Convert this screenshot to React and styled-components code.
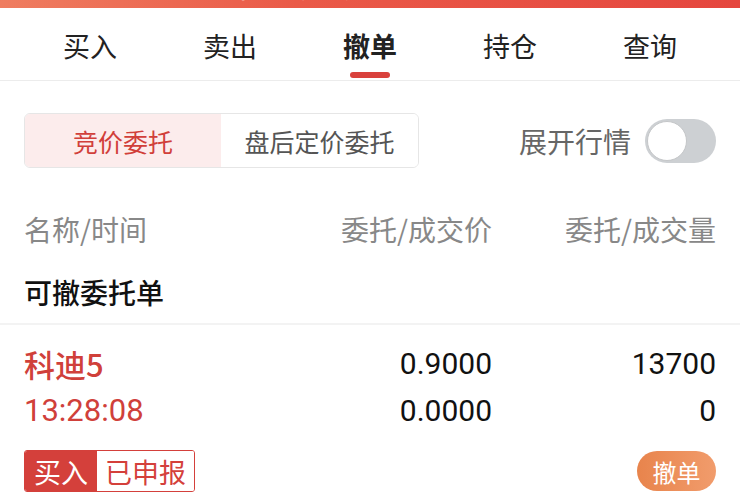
import React, { useState } from 'react';
import styled, { createGlobalStyle } from 'styled-components';

const GlobalStyle = createGlobalStyle`
  html, body { margin:0; padding:0; background:#fff; }
  body { font-family: Roboto, "Noto Sans CJK SC", sans-serif; }
`;

const Page = styled.div`
width:740px;
height:500px;
overflow:hidden;
background:#fff;
`;

const TopBar = styled.div`
height:8px;
overflow:hidden;
background:linear-gradient(90deg,#ef7d60 0%,#ea5a48 40%,#e5463e 100%);
display:flex;
align-items:flex-start;
justify-content:center;
padding-right:140px;
`;

const TopTitle = styled.span`
display:block;
color:#fff;
font-size:32px;
line-height:32px;
margin-top:-33px;
font-family:"Noto Sans CJK SC", sans-serif;
`;

const Tabs = styled.div`
display:grid;
grid-template-columns:repeat(5,1fr);
padding:0 20px;
height:72px;
border-bottom:1px solid #ececec;
`;

const Tab = styled.div`
display:flex;
flex-direction:column;
align-items:center;
justify-content:flex-end;
font-family:"Noto Sans CJK SC", sans-serif;
font-size:27px;
font-weight:${p => (p.active ? 700 : 400)};
color:#222;
cursor:pointer;
& span { line-height:36px; margin-bottom:8px; }
& i {
  display:block;
  width:40px;
  height:6px;
  border-radius:3px;
  background:${p => (p.active ? '#d9413c' : 'transparent')};
  margin-bottom:2px;
}
`;

const FilterRow = styled.div`
display:flex;
align-items:center;
justify-content:space-between;
padding:32px 24px 0;
`;

const Segment = styled.div`
display:flex;
height:53px;
border:1px solid #e6e6e6;
border-radius:6px;
overflow:hidden;
`;

const SegItem = styled.div`
width:${p => p.w}px;
display:flex;
align-items:center;
justify-content:center;
font-family:"Noto Sans CJK SC", sans-serif;
font-size:25px;
color:${p => (p.active ? '#d13f3a' : '#555')};
background:${p => (p.active ? '#fcecec' : '#fff')};
`;

const Expand = styled.div`
display:flex;
align-items:center;
gap:14px;
font-family:"Noto Sans CJK SC", sans-serif;
font-size:28px;
color:#666;
`;

const Toggle = styled.div`
width:71px;
height:44px;
border-radius:22px;
background:${p => (p.on ? '#e5463e' : '#cdd0d3')};
display:flex;
align-items:center;
justify-content:${p => (p.on ? 'flex-end' : 'flex-start')};
padding:0 2px;
box-sizing:border-box;
cursor:pointer;
& b {
  width:40px;
  height:40px;
  border-radius:50%;
  background:#fff;
  box-sizing:border-box;
  border:1px solid #c4c6c8;
}
`;

const ColHead = styled.div`
display:grid;
grid-template-columns:1fr 210px 224px;
padding:0 24px;
margin-top:36px;
height:50px;
align-items:center;
font-family:"Noto Sans CJK SC", sans-serif;
font-size:28px;
color:#888;
& span:not(:first-child) { text-align:right; }
`;

const Section = styled.div`
padding:20px 24px 13px;
line-height:36px;
font-family:"Noto Sans CJK SC", sans-serif;
font-size:28px;
font-weight:500;
color:#111;
border-bottom:2px solid #f3f3f3;
`;

const Order = styled.div`
padding:16px 24px 0;
`;

const Line = styled.div`
display:grid;
grid-template-columns:1fr 210px 224px;
align-items:center;
height:36px;
margin-bottom:15px;
font-family:Roboto, "Noto Sans CJK SC", sans-serif;
font-size:30px;
color:#111;
& span:not(:first-child) { text-align:right; }
`;

const Name = styled.span`
color:#d0403a;
font-size:31px;
font-weight:500;
font-family:"Noto Sans CJK SC", Roboto, sans-serif;
`;

const Time = styled.span`
color:#d0403a;
font-size:31px;
font-family:Roboto, sans-serif;
`;

const Actions = styled.div`
display:flex;
justify-content:space-between;
align-items:center;
margin-top:22px;
`;

const Tags = styled.div`
display:flex;
height:42px;
border:1.5px solid #d4403b;
border-radius:3px;
overflow:hidden;
box-sizing:border-box;
`;

const Tag = styled.span`
display:flex;
align-items:center;
padding:0 ${p => (p.filled ? 9 : 8)}px;
font-family:"Noto Sans CJK SC", sans-serif;
font-size:27px;
color:${p => (p.filled ? '#fff' : '#d4403b')};
background:${p => (p.filled ? '#d4403b' : '#fff')};
`;

const CancelBtn = styled.button`
width:79px;
height:40px;
border:none;
border-radius:20px;
background:linear-gradient(90deg,#e8844c,#f19c6c);
color:#fff;
font-family:"Noto Sans CJK SC", sans-serif;
font-size:24px;
padding:0;
cursor:pointer;
`;

const tabs = ['买入', '卖出', '撤单', '持仓', '查询'];

const App = () => {
  const [active, setActive] = useState(2);
  const [seg, setSeg] = useState(0);
  const [on, setOn] = useState(false);
  return (
    <Page>
      <GlobalStyle />
      <TopBar><TopTitle>普通交易</TopTitle></TopBar>
      <Tabs>
        {tabs.map((t, i) => (
          <Tab key={t} active={i === active} onClick={() => setActive(i)}>
            <span>{t}</span>
            <i />
          </Tab>
        ))}
      </Tabs>
      <FilterRow>
        <Segment>
          <SegItem w={196} active={seg === 0} onClick={() => setSeg(0)}>竞价委托</SegItem>
          <SegItem w={197} active={seg === 1} onClick={() => setSeg(1)}>盘后定价委托</SegItem>
        </Segment>
        <Expand>
          展开行情
          <Toggle on={on} onClick={() => setOn(!on)}><b /></Toggle>
        </Expand>
      </FilterRow>
      <ColHead>
        <span>名称/时间</span>
        <span>委托/成交价</span>
        <span>委托/成交量</span>
      </ColHead>
      <Section>可撤委托单</Section>
      <Order>
        <Line>
          <Name>科迪5</Name>
          <span>0.9000</span>
          <span>13700</span>
        </Line>
        <Line>
          <Time>13:28:08</Time>
          <span>0.0000</span>
          <span>0</span>
        </Line>
        <Actions>
          <Tags>
            <Tag filled>买入</Tag>
            <Tag>已申报</Tag>
          </Tags>
          <CancelBtn>撤单</CancelBtn>
        </Actions>
      </Order>
    </Page>
  );
};

export default App;
